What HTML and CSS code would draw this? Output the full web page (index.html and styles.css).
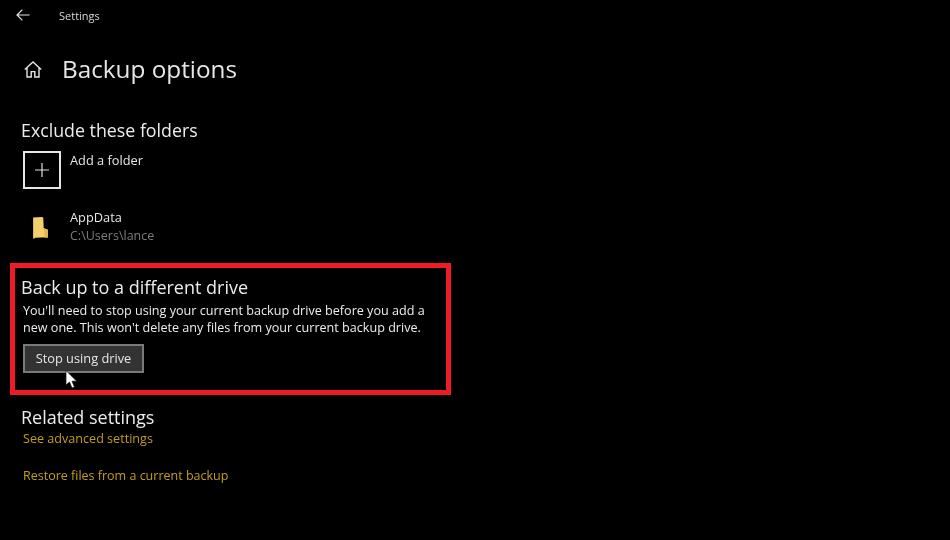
FILE: index.html
```html
<!DOCTYPE html>
<html lang="en">
<head>
<meta charset="utf-8">
<title>Settings</title>
<link rel="stylesheet" href="styles.css">
</head>
<body>
<div class="page">
  <header class="titlebar">
    <svg class="back" width="14" height="12" viewBox="0 0 14 12" fill="none" stroke="#e4e4e4" stroke-width="1.2"><path d="M6.4.6 1 6l5.4 5.4M1 6h12.6"/></svg>
    <span class="app">Settings</span>
  </header>
  <div class="heading">
    <svg class="home" width="18" height="17" viewBox="0 0 18 17" fill="none" stroke="#e6e6e6" stroke-width="1.4"><path d="M.8 8.600 9 1l8.200 7.600M3 7v9h4.200v-5.400h3.600V16H15V7"/></svg>
    <h1>Backup options</h1>
  </div>
  <section class="exclude">
    <h2>Exclude these folders</h2>
    <div class="row add">
      <div class="plus"><svg width="14" height="14" viewBox="0 0 14 14" stroke="#e0e0e0" stroke-width="1.2"><path d="M7 0v14M0 7h14"/></svg></div>
      <span class="label">Add a folder</span>
    </div>
    <div class="row folder">
      <div class="folder-slot"><svg width="17" height="24" viewBox="0 0 18 26"><path d="M1 1.500 10.500 1 12 1.500V13l5 2V23L3 23.500 2 25 1 24Z" fill="#f3cf6e"/><path d="M12 2v11l5 2v8.500H13.500Z" fill="#e2b650"/></svg></div>
      <div class="folder-text"><span class="label">AppData</span><span class="path">C:\Users\lance</span></div>
    </div>
  </section>
  <section class="callout">
    <h2 class="wide">Back up to a different drive</h2>
    <p>You'll need to stop using your current backup drive before you add a new one. This won't delete any files from your current backup drive.</p>
    <div class="btn-wrap">
      <button class="btn">Stop using drive</button>
      <svg class="cursor" width="13" height="19" viewBox="0 0 13 19"><path d="M1 .5V15l3.500-3 2.500 6 2.500-1-2.500-5.800h4.700Z" fill="#fff" stroke="#111" stroke-width=".7"/></svg>
    </div>
  </section>
  <section class="related">
    <h2 class="wide">Related settings</h2>
    <a class="link first">See advanced settings</a>
    <a class="link">Restore files from a current backup</a>
  </section>
</div>
</body>
</html>
```
FILE: styles.css
```css
* { box-sizing: border-box; }
html, body { margin: 0; height: 100%; background: #000; }
body { font-family: "Open Sans", "Noto Sans", sans-serif; color: #e8e8e8; overflow: hidden; }
.page { width: 950px; height: 540px; display: flex; flex-direction: column; filter: blur(.5px); }
.titlebar { height: 32px; display: flex; align-items: center; padding-left: 16px; }
.back { margin-top: -2px; }
.app { margin-left: 29px; margin-top: -2px; font-size: 11px; color: #d8d8d8; }
.heading { display: flex; align-items: center; padding-left: 24px; margin-top: 16px; height: 42px; }
.heading h1 { margin: 0 0 0 20px; font-size: 24.300px; font-weight: 400; color: #e6e6e6; line-height: 42px; }
h2 { margin: 0; font-size: 17.800px; font-weight: 400; line-height: 24px; color: #ececec; }
h2.wide { font-size: 18px; margin-left: -1px; }
.related h2.wide { margin-left: 0; }
.exclude { padding-left: 21px; margin-top: 28px; }
.row { display: flex; }
.add { margin-top: 9px; margin-left: 2px; }
.plus { width: 38px; height: 38px; border: 2px solid #e6e6e6; display: flex; align-items: center; justify-content: center; }
.label { font-size: 12.800px; line-height: 17px; color: #e6e6e6; }
.add .label { margin-left: 9px; margin-top: 1px; }
.folder { margin-top: 20px; margin-left: 2px; }
.folder-slot { width: 38px; padding: 7px 0 0 9px; }
.folder-text { display: flex; flex-direction: column; margin-left: 9px; }
.path { margin-top: 1px; font-size: 12.500px; line-height: 18px; color: #7c7c7c; }
.callout { width: 441px; height: 132px; margin: 18px 0 0 10px; border: 5px solid #ee1c25; padding: 7px 0 0 7px; }
.callout p { margin: 3px 0 0 1px; width: 412px; font-size: 12.600px; line-height: 17px; color: #ededed; }
.btn-wrap { position: relative; margin: 8px 0 0 1px; width: 121px; }
.btn { display: block; width: 121px; height: 29px; padding: 0 0 2px; background: #333; border: 2px solid #7a7a7a; font: 12.800px "Open Sans", sans-serif; color: #e6e6e6; }
.cursor { position: absolute; left: 42px; top: 26px; }
.related { padding-left: 21px; margin-top: 10px; display: flex; flex-direction: column; }
.link { margin-left: 2px; margin-top: 18px; font-size: 12.500px; line-height: 19px; color: #c29e1c; }
.link.first { margin-top: 0; font-size: 12.600px; }
```
